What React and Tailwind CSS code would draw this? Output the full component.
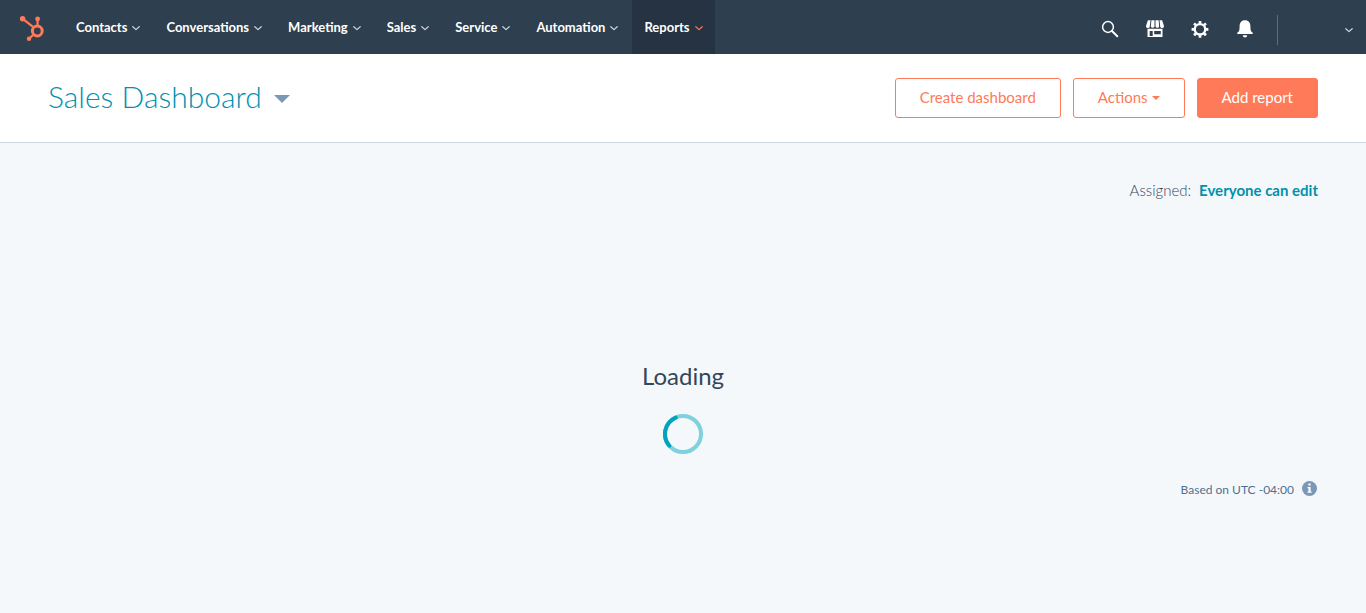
import React from 'react';

const NAV_ITEMS = ['Contacts', 'Conversations', 'Marketing', 'Sales', 'Service', 'Automation', 'Reports'];

function Chevron({ className = '' }) {
  return (
    <svg className={`h-2 w-2 shrink-0 ${className}`} viewBox="0 0 8 8" fill="none" stroke="currentColor" strokeWidth="1.2" strokeLinecap="round" strokeLinejoin="round" aria-hidden="true">
      <path d="M.8 2.7 4 5.6l3.200-2.900" />
    </svg>
  );
}

function Logo() {
  return (
    <svg className="h-7 w-7" viewBox="0 0 28 28" fill="none" stroke="#ff7a59" aria-hidden="true">
      <circle cx="18.300" cy="17" r="4.900" strokeWidth="3" />
      <path d="M3.800 4.800 14 12.800M18.600 5v6.500M14.300 20.800 10.200 24.600" strokeWidth="2.200" />
      <g fill="#ff7a59" stroke="none">
        <circle cx="3.600" cy="4.700" r="2.700" />
        <circle cx="18.600" cy="5" r="2.400" />
        <circle cx="10" cy="24.800" r="2.200" />
      </g>
    </svg>
  );
}

function SearchIcon() {
  return (
    <svg className="h-5 w-5" viewBox="0 0 20 20" fill="none" stroke="currentColor" aria-hidden="true">
      <circle cx="8" cy="8" r="5.400" strokeWidth="1.500" />
      <path d="m12 12 5.300 5.300" strokeWidth="2" strokeLinecap="round" />
    </svg>
  );
}

function StoreIcon() {
  return (
    <svg className="h-5 w-5" viewBox="0 0 20 20" fill="currentColor" aria-hidden="true">
      <path d="M2.900 1.200h2.600L4.800 7.400a1.900 1.900 0 0 1-3.800-.4zM6.400 1.200h3.100v6.200a1.900 1.900 0 0 1-3.700 0zM10.500 1.200h3.100l.6 6.200a1.900 1.900 0 0 1-3.700 0zM14.500 1.200h2.600L19 7a1.900 1.900 0 0 1-3.800.4z" />
      <path fillRule="evenodd" d="M2.500 9.700h15V18h-15zM4.700 12.100V17h3v-4.900zM9.200 12.100v3.100h6.600v-3.100z" />
    </svg>
  );
}

function GearIcon() {
  return (
    <svg className="h-5 w-5" viewBox="0 0 20 20" fill="none" stroke="currentColor" aria-hidden="true">
      <circle cx="10" cy="10.300" r="5.200" strokeWidth="2.300" />
      <path d="M10 1.900v2.900M10 15.800v2.900M1.600 10.300h2.900M15.500 10.300h2.900M4.060 4.360l2.050 2.050M13.890 14.190l2.050 2.050M15.940 4.360l-2.050 2.050M6.110 14.190l-2.050 2.050" strokeWidth="2.700" />
    </svg>
  );
}

function BellIcon() {
  return (
    <svg className="h-5 w-5" viewBox="0 0 20 20" fill="currentColor" aria-hidden="true">
      <path d="M10 1.300c3.700 0 5.400 2.700 5.400 5.900 0 3.800.4 5.300 2.100 6.400.6.400.6 1.400-.3 1.400H2.800c-.9 0-.9-1-.3-1.400 1.700-1.100 2.100-2.600 2.100-6.400 0-3.200 1.700-5.900 5.400-5.900zM7.800 16.300h4.400a2.200 2.200 0 0 1-4.400 0z" />
    </svg>
  );
}

function Caret({ className }) {
  return (
    <svg className={className} viewBox="0 0 16 8" fill="currentColor" aria-hidden="true">
      <path d="M0 0h16L8 8z" />
    </svg>
  );
}

function TopBar() {
  return (
    <header className="flex h-[54px] items-center bg-[#2e3f50] text-white">
      <a href="#home" aria-label="Home" className="ml-[19px] mr-[17px] mt-px">
        <Logo />
      </a>
      <nav className="flex gap-0.5 self-stretch" aria-label="Main">
        {NAV_ITEMS.map((item) => {
          const active = item === 'Reports';
          return (
            <button key={item} type="button" className={`flex items-center gap-[5px] px-3 pt-px text-[13px] font-bold ${active ? 'bg-[#253342]' : ''}`}>
              {item}
              <Chevron className={active ? 'text-[#ff7a59]' : 'text-[#cbd6e2]'} />
            </button>
          );
        })}
      </nav>
      <div className="ml-auto mt-1 flex items-center gap-[25px]">
        <button type="button" aria-label="Search"><SearchIcon /></button>
        <button type="button" aria-label="Marketplace"><StoreIcon /></button>
        <button type="button" aria-label="Settings"><GearIcon /></button>
        <button type="button" aria-label="Notifications"><BellIcon /></button>
      </div>
      <button type="button" aria-label="Account" className="ml-[22px] mr-[13px] mt-[6px] flex h-[30px] w-[76px] items-center justify-end border-l border-[#516f90]">
        <Chevron className="text-[#cbd6e2]" />
      </button>
    </header>
  );
}

export default function App() {
  return (
    <div className="flex min-h-screen flex-col bg-[#f5f8fa] font-['Lato','Liberation_Sans',sans-serif] text-[#33475b]">
      <TopBar />
      <section className="flex items-start justify-between border-b border-[#cbd6e2] bg-white px-12 py-6">
        <h1>
          <button type="button" className="flex items-center gap-3 text-[30px] leading-9 font-light text-[#0091ae]">
            Sales Dashboard
            <Caret className="mt-1.5 h-2 w-4 text-[#7c98b6]" />
          </button>
        </h1>
        <div className="flex gap-3 text-[15px]">
          <button type="button" className="h-10 rounded-[3px] border border-[#ff7a59] px-6 pb-0.5 text-[#ff7a59]">Create dashboard</button>
          <button type="button" className="flex h-10 items-center gap-1 rounded-[3px] border border-[#ff7a59] px-6 pb-0.5 text-[#ff7a59]">
            Actions
            <Caret className="mt-0.5 h-1 w-2" />
          </button>
          <button type="button" className="h-10 rounded-[3px] border border-[#ff7a59] bg-[#ff7a59] px-6 pb-0.5 text-white">Add report</button>
        </div>
      </section>
      <main className="flex flex-col px-12 pt-[35px]">
        <p className="flex justify-end gap-2 text-[15px] leading-6">
          <span className="font-light">Assigned:</span>
          <a href="#permissions" className="font-bold text-[#0091ae]">Everyone can edit</a>
        </p>
        <div className="mt-[158px] flex flex-col items-center gap-[22px]" role="status">
          <p className="text-2xl">Loading</p>
          <svg className="h-10 w-10" viewBox="0 0 40 40" fill="none" strokeWidth="4" aria-hidden="true">
            <circle cx="20" cy="20" r="18" stroke="#7fd1de" />
            <path d="M12.700 3.550A18 18 0 0 0 6.300 31.700" stroke="#00a4bd" strokeLinecap="round" />
          </svg>
        </div>
        <p className="mt-[26px] flex items-center justify-end gap-2 text-xs leading-5 text-[#516f90]">
          Based on UTC -04:00
          <svg className="mb-0.5 h-4 w-4" viewBox="0 0 16 16" aria-hidden="true">
            <circle cx="7.500" cy="7.500" r="7.500" fill="#7c98b6" />
            <path d="M6.400 2.500h2.200v2H6.400zM5.500 5.900h3.100v4.500h1v1.300H5.500v-1.300h1V7.200h-1z" fill="#fff" />
          </svg>
        </p>
      </main>
    </div>
  );
}
